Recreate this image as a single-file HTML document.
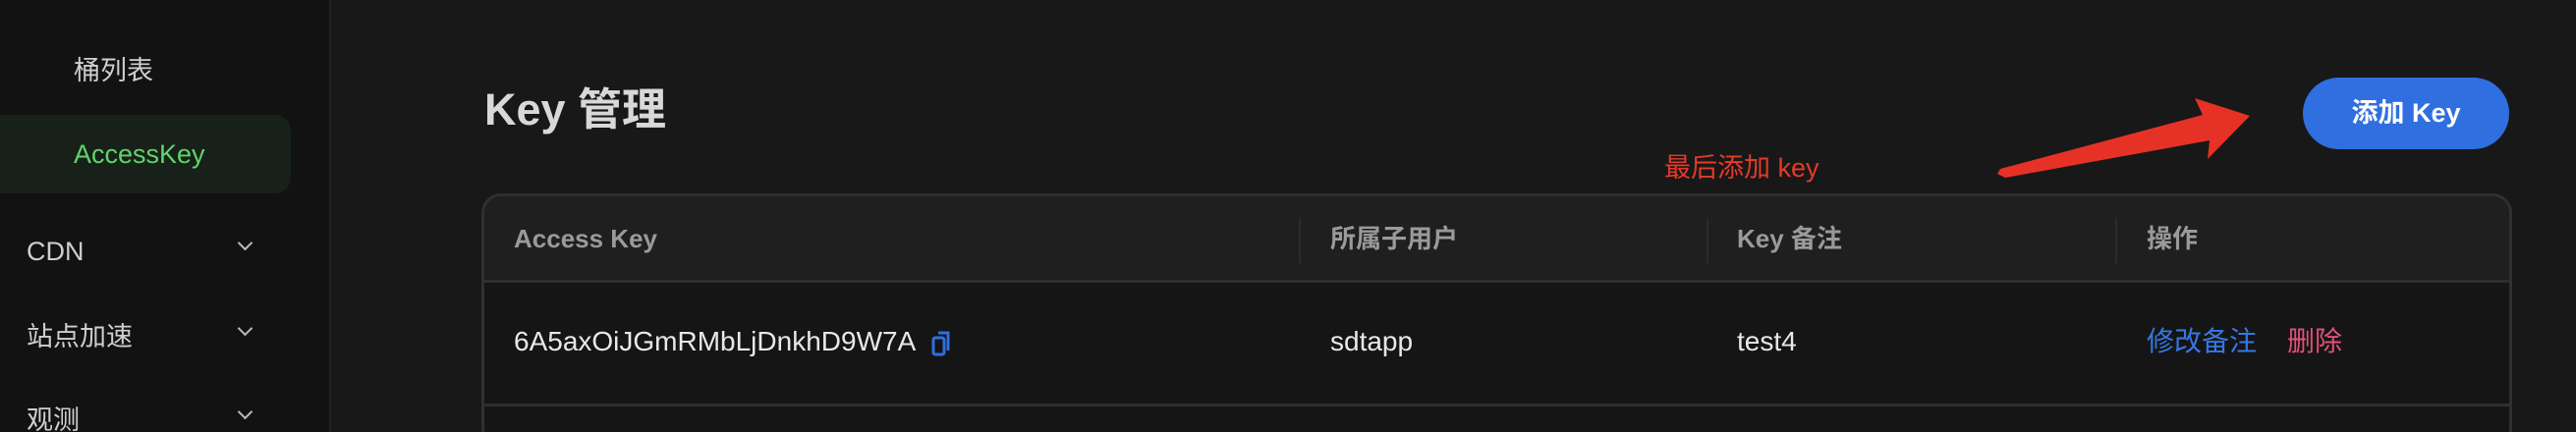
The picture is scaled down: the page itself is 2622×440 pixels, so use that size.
<!DOCTYPE html>
<html><head><meta charset="utf-8"><style>
*{margin:0;padding:0;box-sizing:border-box}
html,body{width:2622px;height:440px;overflow:hidden}
body{background:#181818;position:relative;font-family:"Liberation Sans","Noto Sans CJK SC",sans-serif}
.sb{position:absolute;left:0;top:0;width:337px;height:440px;background:#121212;border-right:2px solid #222}
.t{position:absolute;white-space:nowrap;line-height:40px}
.mi{font-size:27px;color:#cfcfcf}
.chev{position:absolute;left:244px;width:11px;height:11px;border-right:2.5px solid #bbb;border-bottom:2.5px solid #bbb;transform:rotate(45deg)}
.tbl{position:absolute;left:490px;top:197px;width:2067px;height:260px;border:3px solid #303030;border-radius:20px;background:#151515;overflow:hidden}
.hd{position:absolute;left:0;top:0;right:0;height:88px;background:#1f1f1f;border-bottom:3px solid #2e2e2e}
.dv{position:absolute;top:23px;width:2px;height:45px;background:#2c2c2c}
.th{font-size:26px;color:#9a9a9a;font-weight:bold}
.td{font-size:28px;color:#e8e8e8}
</style></head><body>
<div class="sb"></div>
<div class="t mi" style="left:75px;top:52px">桶列表</div>
<div style="position:absolute;left:0;top:117px;width:296px;height:80px;background:#18201a;border-radius:0 16px 16px 0"></div>
<div class="t mi" style="left:75px;top:137px;color:#5fd46a">AccessKey</div>
<div class="t mi" style="left:27px;top:236px">CDN</div><div class="chev" style="top:242px"></div>
<div class="t mi" style="left:27px;top:323px">站点加速</div><div class="chev" style="top:329px"></div>
<div class="t mi" style="left:27px;top:408px">观测</div><div class="chev" style="top:414px"></div>

<div class="t" style="left:493px;top:84px;font-size:45px;font-weight:bold;color:#d8d8d8;line-height:56px">Key 管理</div>
<div class="t" style="left:2344px;top:79px;width:210px;height:73px;border-radius:37px;background:#2f6fe0;color:#fff;font-size:27px;font-weight:bold;text-align:center;line-height:73px">添加 Key</div>
<div class="t" style="left:1694px;top:151px;font-size:27px;color:#e63a2a">最后添加 key</div>
<svg style="position:absolute;left:0;top:0" width="2622" height="440"><polygon points="2036,172 2242,117 2234,100 2290,118 2247,162 2249,143 2041,181 2033,177" fill="#e63226"/></svg>

<div class="tbl">
<div class="hd">
<div class="t th" style="left:30px;top:23px">Access Key</div>
<div class="dv" style="left:829px"></div><div class="t th" style="left:861px;top:23px">所属子用户</div>
<div class="dv" style="left:1244px"></div><div class="t th" style="left:1275px;top:23px">Key 备注</div>
<div class="dv" style="left:1660px"></div><div class="t th" style="left:1692px;top:23px">操作</div>
</div>
<div class="t td" style="left:30px;top:128px">6A5axOiJGmRMbLjDnkhD9W7A</div>
<svg style="position:absolute;left:455px;top:136px" width="22" height="28"><rect x="2" y="8" width="11" height="17" rx="2" fill="none" stroke="#2f6fe0" stroke-width="3"/><path d="M7 3h10v18" fill="none" stroke="#2f6fe0" stroke-width="3"/></svg>
<div class="t td" style="left:861px;top:128px">sdtapp</div>
<div class="t td" style="left:1275px;top:128px">test4</div>
<div class="t td" style="left:1692px;top:128px;color:#3577e5">修改备注</div>
<div class="t td" style="left:1835px;top:128px;color:#e0507a">删除</div>
<div style="position:absolute;left:0;right:0;top:211px;height:3px;background:#2e2e2e"></div>
</div>
</body></html>
